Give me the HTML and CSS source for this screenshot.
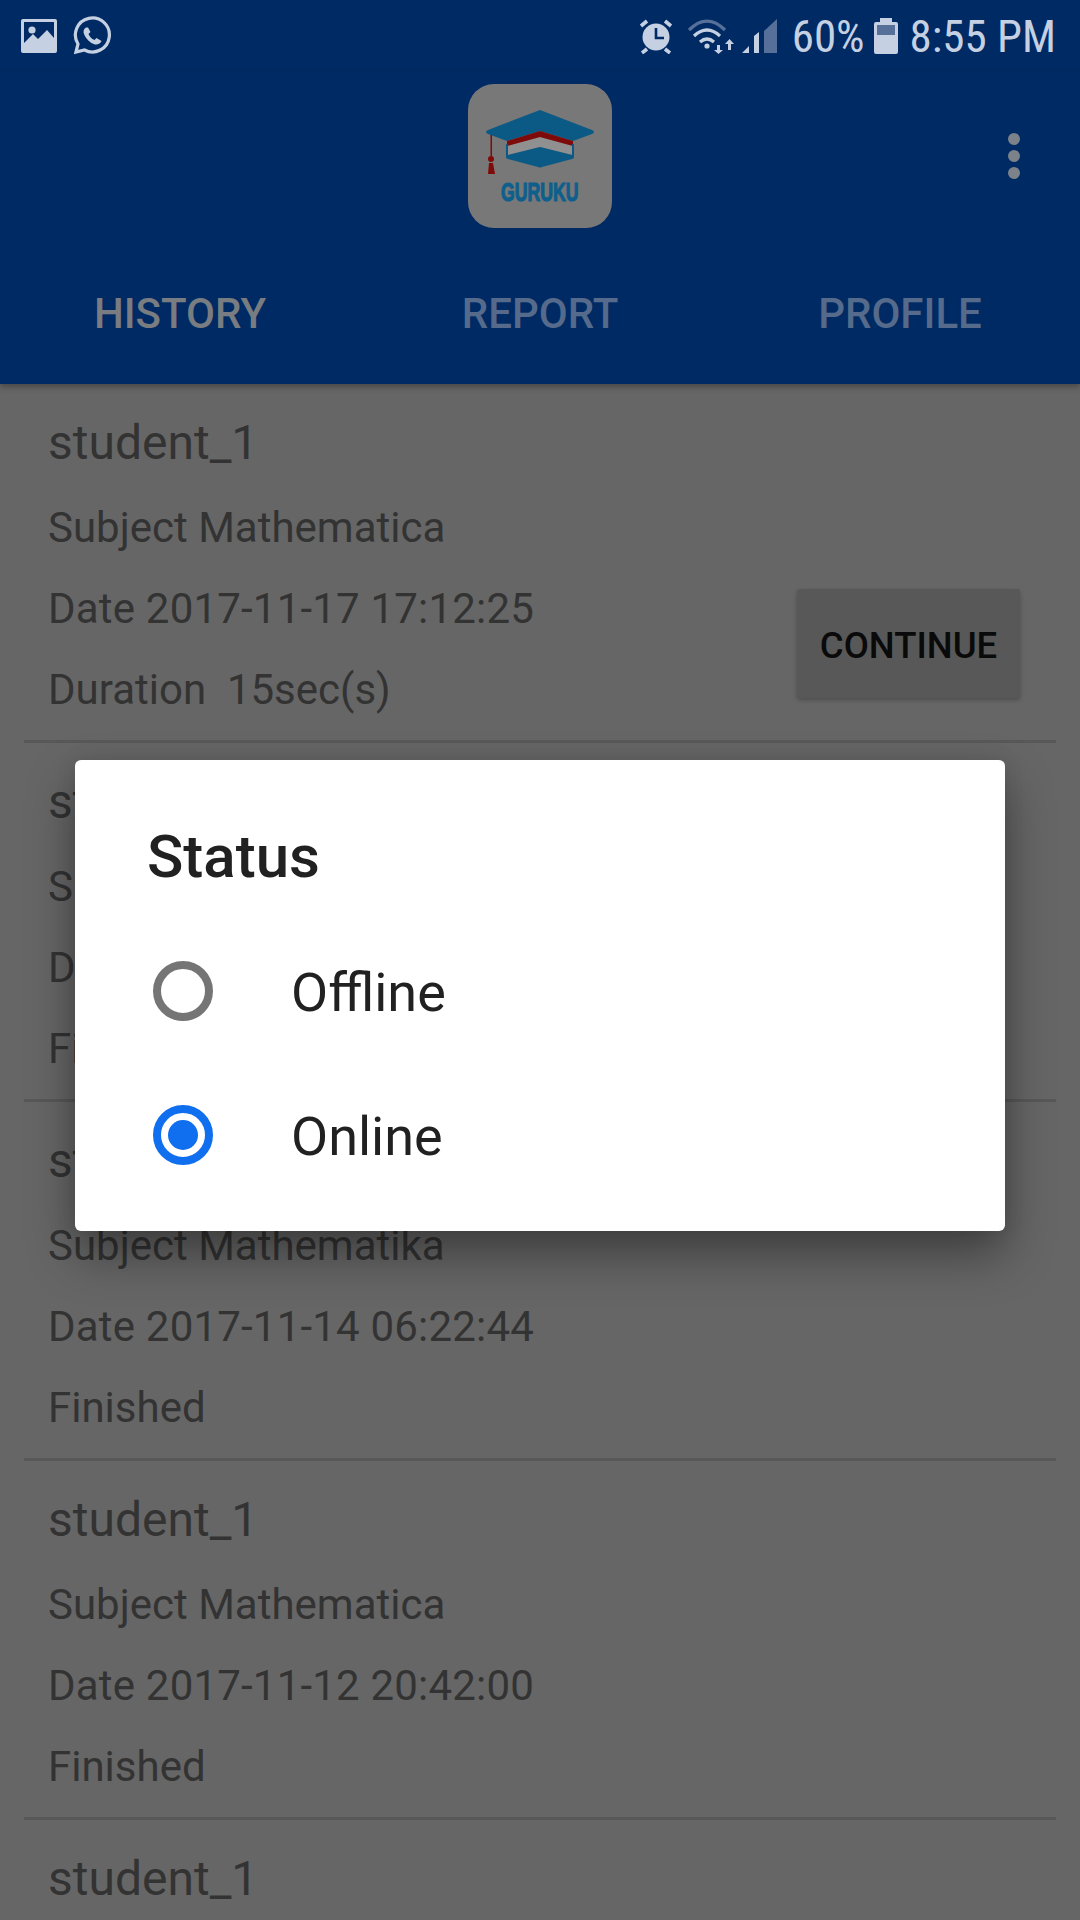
FILE: index.html
```html
<!DOCTYPE html>
<html>
<head>
<meta charset="UTF-8">
<title>Guruku</title>
<link rel="stylesheet" href="styles.css">
</head>
<body>
<div class="screen">
  <!-- status bar -->
  <div class="statusbar">
    <div class="status-left">
      <svg class="ic-image" width="36" height="34" viewBox="0 0 36 34"><path fill="#c5d1e3" fill-rule="evenodd" d="M2 0H34Q36 0 36 2V32Q36 34 34 34H2Q0 34 0 32V2Q0 0 2 0ZM3 3V24L12 15L17 20L26 11L33 19V3Z"/><circle cx="11" cy="11" r="3.6" fill="#c5d1e3"/></svg>
      <svg class="ic-whatsapp" width="40" height="40" viewBox="0 0 40 40"><path fill="none" stroke="#c5d1e3" stroke-width="3.2" d="M3 36L5 28A17 17 0 1 1 11.500 34Z"/><path fill="#c5d1e3" d="M13 11.500C10.500 13 10 15.500 11 18C13 23 17 27 22 28.500C25 29 27.500 27.500 28.500 25L23.500 22L21.500 24C18.500 23 16.500 20.500 15.500 18L17.500 16L15 11.500Z"/></svg>
    </div>
    <div class="status-right">
      <svg class="ic-alarm" width="34" height="36" viewBox="0 0 34 36"><circle cx="17" cy="19" r="13.500" fill="#c5d1e3"/><path d="M2 8L8 3M32 8L26 3M8 31L3 35M26 31L31 35" stroke="#c5d1e3" stroke-width="3.600"/><path d="M17 10V20H25" fill="none" stroke="#002a63" stroke-width="2.600"/></svg>
      <svg class="ic-wifi" width="48" height="36" viewBox="0 0 48 36"><path d="M2 12Q20 -6 38 12" fill="none" stroke="#56709a" stroke-width="3.200"/><path d="M7 18Q20 6 33 18" fill="none" stroke="#c5d1e3" stroke-width="3.200"/><path d="M13 24Q20 18 27 24" fill="none" stroke="#c5d1e3" stroke-width="3.200"/><circle cx="20" cy="28" r="2.600" fill="#c5d1e3"/><path d="M30 27H33V32H36L31.500 36L27 32H30ZM41 32H44V26H47L42.500 21L38 26H41Z" fill="#c5d1e3"/></svg>
      <svg class="ic-signal" width="35" height="36" viewBox="0 0 35 36"><path d="M0 35L7 28V35ZM12 18L17 14V35H12Z" fill="#c5d1e3"/><path d="M22 13L35 1V35H22Z" fill="#56709a"/></svg>
      <span class="status-pct">60%</span>
      <svg class="ic-battery" width="24" height="36" viewBox="0 0 24 36"><path d="M6 0H18V4H22Q24 4 24 6V34Q24 36 22 36H2Q0 36 0 34V6Q0 4 2 4H6Z" fill="#c5d1e3"/><rect x="3" y="7" width="18" height="10" fill="#56709a"/></svg>
      <span class="status-time">8:55 PM</span>
    </div>
  </div>

  <!-- app bar -->
  <div class="appbar">
    <div class="toolbar">
      <div class="logo">
        <svg width="144" height="144" viewBox="0 0 144 144">
          <path fill="#0b5a85" d="M18 48Q18 47 20 46L72 26L124 46Q126 47 126 48Q126 49 124 50L105 57L72 47L39 57L20 50Q18 49 18 48Z"/>
          <path fill="#909090" d="M39 62L72 53L105 62V71L72 63L39 71Z"/>
          <path fill="#7f0a0a" d="M39 57L72 47L105 57V62L72 53L39 62Z"/>
          <path fill="#0b5a85" d="M38 60H40V71L72 63L104 71V60H106V73Q106 75 104 75L74 83Q72 84 70 83L40 75Q38 75 38 73Z"/>
          <path fill="#7f0a0a" d="M22.500 51H24V72H22.500ZM23 72A3 3 0 1 1 23 78A3 3 0 1 1 23 72ZM21 79H25L27 90H20Z"/>
          <text class="logo-text" transform="translate(33 117) scale(0.68 1)">GURUKU</text>
        </svg>
      </div>
      <div class="menu"><i></i><i></i><i></i></div>
    </div>
    <div class="tabs">
      <div class="tab tab-active">HISTORY</div>
      <div class="tab">REPORT</div>
      <div class="tab">PROFILE</div>
    </div>
  </div>

  <!-- history list -->
  <div class="list">
    <div class="row">
      <div class="row-text">
        <div class="row-name">student_1</div>
        <div class="row-line">Subject Mathematica</div>
        <div class="row-line row-date">Date 2017-11-17 17:12:25</div>
        <div class="row-line">Duration&nbsp; 15sec(s)</div>
      </div>
      <div class="btn">CONTINUE</div>
    </div>
    <div class="row">
      <div class="row-text">
        <div class="row-name">student_1</div>
        <div class="row-line">Subject Mathematica</div>
        <div class="row-line row-date">Date 2017-11-15 10:31:08</div>
        <div class="row-line">Finished</div>
      </div>
    </div>
    <div class="row">
      <div class="row-text">
        <div class="row-name">student_1</div>
        <div class="row-line">Subject Mathematika</div>
        <div class="row-line row-date">Date 2017-11-14 06:22:44</div>
        <div class="row-line">Finished</div>
      </div>
    </div>
    <div class="row">
      <div class="row-text">
        <div class="row-name">student_1</div>
        <div class="row-line">Subject Mathematica</div>
        <div class="row-line row-date">Date 2017-11-12 20:42:00</div>
        <div class="row-line">Finished</div>
      </div>
    </div>
    <div class="row">
      <div class="row-text">
        <div class="row-name">student_1</div>
      </div>
    </div>
  </div>

  <!-- status dialog -->
  <div class="overlay">
    <div class="dialog">
      <div class="dialog-title">Status</div>
      <div class="option">
        <span class="radio"></span>
        <span class="option-label">Offline</span>
      </div>
      <div class="option">
        <span class="radio radio-on"></span>
        <span class="option-label">Online</span>
      </div>
    </div>
  </div>
</div>
</body>
</html>
```

FILE: styles.css
```css
html, body {
	margin: 0;
	padding: 0;
}
body {
	width: 1080px;
	height: 1920px;
	overflow: hidden;
	font-family: Roboto, "Noto Sans", sans-serif;
}
.screen {
	position: relative;
	width: 1080px;
	height: 1920px;
	overflow: hidden;
	background-color: #666;
}
/* status bar */
.statusbar {
	height: 72px;
	box-sizing: border-box;
	padding: 0 24px 0 21px;
	display: flex;
	align-items: center;
	justify-content: space-between;
	background-color: #002a63;
	color: #c5d1e3;
}
.status-left, .status-right {
	display: flex;
	align-items: center;
}
.status-left {
	gap: 16px;
}
.status-right {
	font-size: 45px;
	font-stretch: condensed;
}
.ic-wifi {
	margin-left: 14px;
}
.ic-signal {
	margin-left: 7px;
}
.status-pct {
	margin-left: 15px;
}
.ic-battery {
	margin-left: 9px;
}
.status-time {
	margin-left: 12px;
}
/* app bar */
.appbar {
	position: relative;
	height: 312px;
	background-color: #002a63;
	box-shadow: 0 3px 6px rgba(0,0,0,0.3);
}
.toolbar {
	height: 168px;
	display: grid;
	grid-template-columns: 1fr auto 1fr;
	align-items: center;
}
.logo {
	grid-column: 2;
	width: 144px;
	height: 144px;
	border-radius: 26px;
	background-color: #787878;
}
.logo svg {
	display: block;
}
.logo-text {
	font-family: "Liberation Sans", sans-serif;
	font-weight: bold;
	font-size: 26px;
	fill: #0e5f8c;
	stroke: #0e5f8c;
	stroke-width: 1.2px;
}
.menu {
	justify-self: end;
	margin-right: 60px;
	display: flex;
	flex-direction: column;
	gap: 5px;
}
.menu i {
	display: block;
	width: 12px;
	height: 12px;
	border-radius: 50%;
	background-color: #7c8289;
}
.tabs {
	display: flex;
	height: 144px;
}
.tab {
	flex: 1;
	text-align: center;
	font-size: 42px;
	font-weight: 500;
	line-height: 148px;
	color: #566a8c;
}
.tab-active {
	color: #797c80;
}
/* list */
.row {
	height: 359px;
	box-sizing: border-box;
	margin: 0 24px;
	border-bottom: 3px solid #585858;
	display: flex;
	align-items: flex-start;
	justify-content: space-between;
	color: #333;
}
.row-text {
	padding: 14px 0 0 24px;
}
.row-name {
	font-size: 48px;
	line-height: 89px;
}
.row-line {
	font-size: 42px;
	line-height: 81px;
}
.row-date {
	letter-spacing: 0.2px;
}
.btn {
	margin: 205px 36px 0 0;
	width: 223px;
	height: 109px;
	border-radius: 3px;
	background-color: #585858;
	box-shadow: 0 2px 4px rgba(0,0,0,0.25);
	color: #0a0a0a;
	font-size: 36.500px;
	font-weight: 500;
	line-height: 113px;
	text-align: center;
}
/* dialog */
.overlay {
	position: absolute;
	left: 0;
	right: 0;
	top: 71px;
	bottom: 0;
	display: flex;
	align-items: center;
	justify-content: center;
}
.dialog {
	width: 930px;
	height: 471px;
	box-sizing: border-box;
	padding: 0 0 24px 0;
	border-radius: 6px;
	background-color: #fff;
	box-shadow: 0 24px 48px rgba(0,0,0,0.38), 0 0 20px rgba(0,0,0,0.1);
	color: #212121;
}
.dialog-title {
	height: 159px;
	box-sizing: border-box;
	padding: 59px 0 0 72px;
	font-size: 60px;
	font-weight: 500;
	line-height: 76px;
}
.option {
	height: 144px;
	display: flex;
	align-items: center;
	padding-left: 78px;
}
.radio {
	width: 60px;
	height: 60px;
	box-sizing: border-box;
	border: 8px solid #757575;
	border-radius: 50%;
	display: flex;
	align-items: center;
	justify-content: center;
}
.radio-on {
	border-color: #0f6fee;
}
.radio-on:after {
	content: "";
	width: 30px;
	height: 30px;
	border-radius: 50%;
	background-color: #0f6fee;
}
.option-label {
	margin-left: 78px;
	font-size: 54px;
	position: relative;
	top: 1px;
}
```
